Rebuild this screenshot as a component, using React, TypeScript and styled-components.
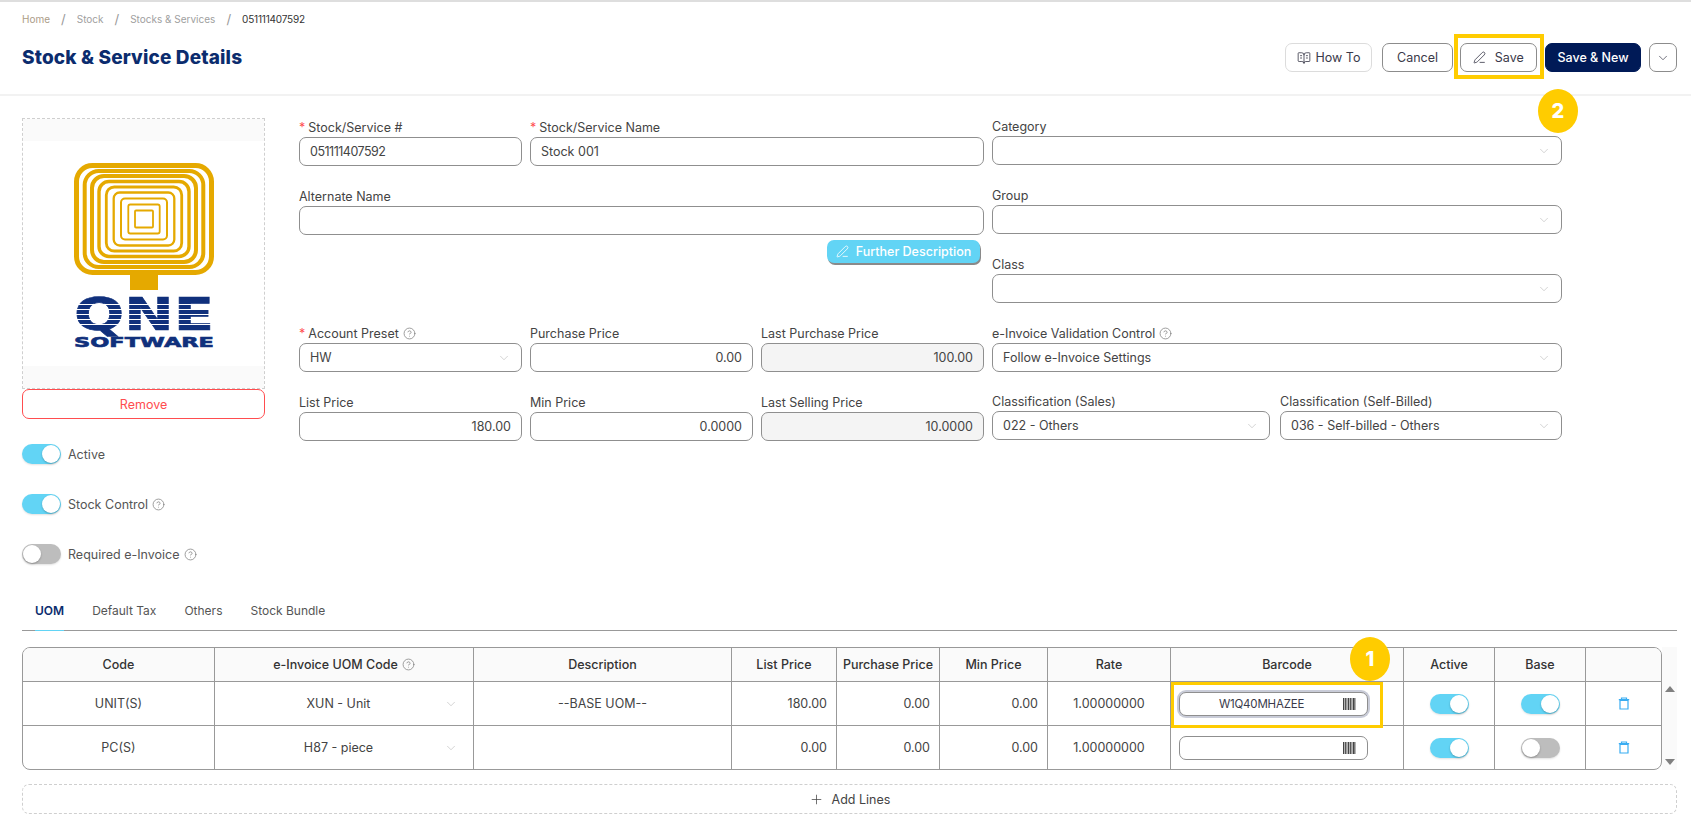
import React from 'react';
import styled, { createGlobalStyle } from 'styled-components';
import { BookOpenText, ChevronDown, CircleHelp, PenLine, Plus } from 'lucide-react';

const GlobalStyle = createGlobalStyle`
  html, body {
    margin: 0;
    padding: 0;
    background: #fff;
  }
  * {
    box-sizing: border-box;
  }
  body {
    font-family: Inter, "Open Sans", "Liberation Sans", sans-serif;
    font-size: 12.5px;
    color: #3a3a3a;
  }
`;

const Page = styled.div`
  width: 1691px;
  height: 833px;
  overflow: hidden;
  border-top: 2px solid #dedede;
`;

const Header = styled.header`
  height: 94px;
  display: flex;
  justify-content: space-between;
  padding: 10px 14px 0 22px;
  border-bottom: 2px solid #f2f2f2;
`;

const Breadcrumb = styled.nav`
  display: flex;
  align-items: center;
  height: 14px;
  font-size: 10px;
`;

const Crumb = styled.span<{ $tone?: 'home' | 'current' }>`
  color: ${(p) => (p.$tone === 'current' ? '#333' : p.$tone === 'home' ? '#ab9c88' : '#a0a0a0')};
  letter-spacing: ${(p) => (p.$tone === 'current' ? '-0.2px' : '0')};
`;

const CrumbSep = styled.span`
  margin: 0 11px;
  font-size: 13px;
  color: #999;
`;

const Title = styled.h1`
  margin: 20px 0 0;
  font-size: 19px;
  line-height: 24px;
  font-weight: 800;
  letter-spacing: 0.15px;
  color: #0b2c6e;
`;

const Actions = styled.div`
  display: flex;
  margin-top: 31px;
  height: 29px;
`;

const ActionButton = styled.button<{ $w: number; $gap: number; $tone?: 'soft' | 'dark' }>`
  width: ${(p) => p.$w}px;
  height: 29px;
  margin-right: ${(p) => p.$gap}px;
  display: inline-flex;
  align-items: center;
  justify-content: center;
  gap: 5px;
  padding: 0;
  border-radius: 7px;
  border: 1px solid ${(p) => (p.$tone === 'soft' ? '#dcdcdc' : p.$tone === 'dark' ? '#001a57' : '#8c8c8c')};
  background: ${(p) => (p.$tone === 'dark' ? '#001a57' : '#fff')};
  color: ${(p) => (p.$tone === 'dark' ? '#fff' : '#3a3a4a')};
  font: ${(p) => (p.$tone === 'dark' ? 500 : 400)} 12.5px Inter, "Liberation Sans", sans-serif;
`;

const Highlight = styled.div`
  position: relative;
  margin-right: 8px;

  &::after {
    content: '';
    position: absolute;
    left: -6px;
    right: -7px;
    top: -9px;
    bottom: -7px;
    border: 4px solid #ffcc00;
    pointer-events: none;
  }
`;

const StepBadge = styled.span<{ $left: number; $top: number }>`
  position: absolute;
  left: ${(p) => p.$left}px;
  top: ${(p) => p.$top}px;
  z-index: 2;
  width: 40px;
  height: 44px;
  border-radius: 50%;
  background: #ffcc00;
  color: #fff;
  display: flex;
  align-items: center;
  justify-content: center;
  font: 800 20px Inter, "Liberation Sans", sans-serif;
`;

const Body = styled.main`
  display: flex;
  gap: 34px;
  padding: 22px 0 0 22px;
`;

const Sidebar = styled.aside`
  width: 243px;
  display: flex;
  flex-direction: column;
`;

const ImageBox = styled.div`
  height: 271px;
  display: flex;
  flex-direction: column;
  border: 1px dashed #cfcfcf;
`;

const ImageStrip = styled.div`
  height: 22px;
  flex: none;
  background: #fafafa;
`;

const ImageArea = styled.div`
  flex: 1;
  display: flex;
  align-items: center;
  justify-content: center;
  padding-top: 9px;
`;

const RemoveButton = styled.button`
  height: 30px;
  border: 1px solid #ff4d4f;
  border-radius: 7px;
  background: #fff;
  color: #ff4d4f;
  font: 400 12.5px Inter, "Liberation Sans", sans-serif;
`;

const ToggleList = styled.div`
  display: flex;
  flex-direction: column;
  gap: 30px;
  margin-top: 25px;
`;

const ToggleRow = styled.div`
  display: flex;
  align-items: center;
  gap: 7px;
  height: 20px;
  color: #555;
`;

const ToggleText = styled.span`
  display: inline-flex;
  align-items: center;
`;

const Toggle = styled.span<{ $on?: boolean }>`
  position: relative;
  display: block;
  flex: none;
  width: 39px;
  height: 20px;
  border-radius: 10px;
  background: ${(p) => (p.$on ? '#62d4f5' : '#bdbdbd')};
  box-shadow: 0 1px 2px rgba(0, 0, 0, 0.12);

  &::after {
    content: '';
    position: absolute;
    top: 1px;
    left: ${(p) => (p.$on ? '20px' : '1px')};
    width: 18px;
    height: 18px;
    border-radius: 50%;
    background: #fff;
    box-shadow: 0 1px 2px rgba(0, 0, 0, 0.25);
  }
`;

const HelpIcon = styled(CircleHelp)`
  flex: none;
  color: #808080;
  margin-left: 4px;
`;

const Form = styled.section`
  display: flex;
  gap: 8px;
`;

const LeftForm = styled.div`
  width: 685px;
  padding-top: 1px;
`;

const FormRow = styled.div<{ $mt?: number }>`
  display: grid;
  grid-template-columns: repeat(3, 223px);
  column-gap: 8px;
  margin-top: ${(p) => p.$mt ?? 0}px;
`;

const RightForm = styled.div`
  width: 570px;
  display: flex;
  flex-direction: column;
  gap: 22px;
`;

const SplitRow = styled.div`
  display: grid;
  grid-template-columns: 278px 282px;
  column-gap: 10px;
  margin-top: -1px;
`;

const Field = styled.div<{ $span?: number }>`
  grid-column: span ${(p) => p.$span ?? 1};
  display: flex;
  flex-direction: column;
  min-width: 0;
`;

const Label = styled.label`
  display: flex;
  align-items: center;
  height: 18px;
  padding-bottom: 2px;
  color: #444;
  font-size: 12.5px;
`;

const Req = styled.span`
  color: #ff4d4f;
  margin-right: 3px;
`;

const Input = styled.input<{ $right?: boolean; $tight?: boolean }>`
  width: 100%;
  height: 29px;
  padding: 0 10px;
  border: 1px solid #8f8f8f;
  border-radius: 7px;
  background: ${(p) => (p.readOnly ? '#f4f4f4' : '#fff')};
  color: #444;
  text-align: ${(p) => (p.$right ? 'right' : 'left')};
  letter-spacing: ${(p) => (p.$tight ? '-0.5px' : '0')};
  font: 400 12.5px Inter, "Liberation Sans", sans-serif;
  outline: none;
`;

const Select = styled.div`
  height: 29px;
  display: flex;
  align-items: center;
  justify-content: space-between;
  padding: 0 10px;
  border: 1px solid #8f8f8f;
  border-radius: 7px;
  background: #fff;
  color: #444;
`;

const Chevron = styled(ChevronDown)`
  flex: none;
  color: #b5b5b5;
`;

const ButtonRow = styled.div`
  display: flex;
  justify-content: flex-end;
  margin: 5px 4px 0 0;
`;

const FurtherButton = styled.button`
  width: 153px;
  height: 23px;
  display: inline-flex;
  align-items: center;
  justify-content: center;
  gap: 7px;
  padding: 0;
  border: none;
  border-radius: 7px;
  background: #62d4f5;
  box-shadow: 1px 2px 0 #8a8a8a;
  color: #fff;
  font: 500 12.5px Inter, "Liberation Sans", sans-serif;
`;

const TabSection = styled.section`
  margin: 28px 14px 0 22px;
`;

const TabBar = styled.div`
  display: flex;
  gap: 28px;
  height: 39px;
  padding-left: 13px;
  border-bottom: 1px solid #999;
  font-size: 12px;
`;

const Tab = styled.div<{ $active?: boolean }>`
  height: 39px;
  display: flex;
  align-items: center;
  padding-bottom: 2px;
  color: ${(p) => (p.$active ? '#0b2c6e' : '#555')};
  font-weight: ${(p) => (p.$active ? 600 : 400)};
  border-bottom: 1px solid ${(p) => (p.$active ? '#62d4f5' : 'transparent')};
`;

const TableWrap = styled.div`
  display: flex;
  margin-top: 16px;
`;

const Table = styled.div`
  width: 1641px;
  border: 1px solid #999;
  border-radius: 8px;
`;

const TableRow = styled.div<{ $head?: boolean }>`
  display: grid;
  grid-template-columns: 192px 259px 258px 105px 103px 108px 123px 233px 91px 91px 1fr;
  height: ${(p) => (p.$head ? 34 : 44)}px;
  background: ${(p) => (p.$head ? '#fafafa' : 'transparent')};
  border-bottom: 1px solid #999;
  border-radius: ${(p) => (p.$head ? '7px 7px 0 0' : '0')};
  font-weight: ${(p) => (p.$head ? 500 : 400)};
  color: ${(p) => (p.$head ? '#333' : '#444')};

  &:last-child {
    height: 43px;
    border-bottom: none;
  }
`;

const Cell = styled.div<{ $align?: 'right' | 'center' }>`
  display: flex;
  align-items: center;
  justify-content: ${(p) => (p.$align === 'right' ? 'flex-end' : 'center')};
  padding: ${(p) => (p.$align === 'right' ? '0 9px 0 0' : '0')};
  border-right: 1px solid #999;
  min-width: 0;

  &:last-child {
    border-right: none;
  }
`;

const UomSelect = styled.div`
  width: 100%;
  display: flex;
  align-items: center;
  padding: 0 15px 0 18px;
`;

const UomText = styled.span`
  flex: 1;
  text-align: center;
`;

const BarcodeHead = styled(Cell)`
  position: relative;
`;

const BarcodeCell = styled(Cell)<{ $marked?: boolean }>`
  position: relative;
  justify-content: flex-start;
  padding-left: 8px;

  &::after {
    content: ${(p) => (p.$marked ? "''" : 'none')};
    position: absolute;
    inset: 0 20px -3px 0;
    border: 3px solid #ffcc00;
    pointer-events: none;
  }
`;

const BarcodeField = styled.div<{ $focus?: boolean }>`
  width: 189px;
  height: 24px;
  display: flex;
  align-items: center;
  padding: 0 11px 0 0;
  border: 1px solid #8f8f8f;
  border-radius: 7px;
  background: #fff;
  box-shadow: ${(p) => (p.$focus ? '0 0 0 2px #c9ccd8' : 'none')};
`;

const BarcodeText = styled.span`
  flex: 1;
  text-align: center;
  font-size: 11.5px;
  letter-spacing: -0.2px;
  color: #3a3a4a;
`;

const TrashSvg = styled.svg`
  color: #39adf2;
`;

const ScrollRail = styled.div`
  width: 15px;
  display: flex;
  flex-direction: column;
  justify-content: space-between;
  align-items: center;
  padding: 39px 0 5px;
  background: #fafafa;
`;

const ScrollArrow = styled.span<{ $down?: boolean }>`
  width: 0;
  height: 0;
  border-left: 5px solid transparent;
  border-right: 5px solid transparent;
  border-bottom: ${(p) => (p.$down ? 'none' : '6px solid #808080')};
  border-top: ${(p) => (p.$down ? '6px solid #808080' : 'none')};
`;

const AddLines = styled.div`
  height: 30px;
  margin-top: 14px;
  display: flex;
  align-items: center;
  justify-content: center;
  gap: 8px;
  border: 1px dashed #cfcfcf;
  border-radius: 7px;
  color: #444;
`;

const LogoWord = styled.text`
  font-family: "DejaVu Sans", "Liberation Sans", sans-serif;
  font-weight: 700;
  fill: #10307c;
  stroke: #10307c;
  stroke-width: 0.6px;
`;

// concentric rings of the logo: half width, half height, stroke, corner radius
const logoRings = [
  [67.5, 53.5, 5, 16],
  [59.3, 48, 4, 14],
  [52, 43, 4, 12],
  [45, 37.5, 3.4, 10],
  [37.7, 32, 2.8, 8],
  [30.3, 26.5, 2.3, 6],
  [23, 20.5, 2, 4],
  [15.7, 14.5, 1.8, 2],
  [9, 8.5, 1.8, 1],
];

const Logo = () => (
  <svg width="140" height="190" viewBox="0 0 140 190">
    {logoRings.map(([w, h, s, r]) => (
      <rect
        key={w}
        x={70 - w}
        y={56 - h}
        width={w * 2}
        height={h * 2}
        rx={r}
        fill="none"
        stroke="#e5a900"
        strokeWidth={s}
      />
    ))}
    <rect x="56" y="111" width="28" height="16" fill="#e5a900" />
    <LogoWord x="0" y="167" fontSize="44" textLength="140" lengthAdjust="spacingAndGlyphs">
      QNE
    </LogoWord>
    {[141, 146, 151, 156, 161].map((y) => (
      <rect key={y} x="0" y={y} width="140" height="1" fill="#fff" />
    ))}
    <LogoWord x="0" y="184" fontSize="14.5" textLength="140" lengthAdjust="spacingAndGlyphs">
      SOFTWARE
    </LogoWord>
  </svg>
);

const BarcodeIcon = () => (
  <svg width="13" height="12" viewBox="0 0 13 12" fill="#444">
    {[0, 2, 3.5, 5, 7, 8.5, 10, 11.5].map((x, i) => (
      <rect key={x} x={x} y="0" width={i % 3 === 0 ? 1.4 : 0.9} height="12" />
    ))}
  </svg>
);

const TrashIcon = () => (
  <TrashSvg width="12" height="13" viewBox="0 0 12 13" fill="none" stroke="currentColor" strokeWidth="1.2">
    <path d="M2 3.5h8v8.5H2z" />
    <path d="M0.8 2.6h10.4M3.5 2.2V1h5v1.2" />
  </TrashSvg>
);

const uomRows = [
  { code: 'UNIT(S)', tax: 'XUN - Unit', desc: '--BASE UOM--', list: '180.00', barcode: 'W1Q40MHAZEE', base: true },
  { code: 'PC(S)', tax: 'H87 - piece', desc: '', list: '0.00', barcode: '', base: false },
];

export default function App() {
  return (
    <Page>
      <GlobalStyle />
      <Header>
        <div>
          <Breadcrumb>
            <Crumb $tone="home">Home</Crumb>
            <CrumbSep>/</CrumbSep>
            <Crumb>Stock</Crumb>
            <CrumbSep>/</CrumbSep>
            <Crumb>Stocks &amp; Services</Crumb>
            <CrumbSep>/</CrumbSep>
            <Crumb $tone="current">051111407592</Crumb>
          </Breadcrumb>
          <Title>Stock &amp; Service Details</Title>
        </div>
        <Actions>
          <ActionButton $w={87} $gap={10} $tone="soft">
            <BookOpenText size={14} strokeWidth={1.4} />
            How To
          </ActionButton>
          <ActionButton $w={71} $gap={7}>Cancel</ActionButton>
          <Highlight>
            <ActionButton $w={77} $gap={0}>
              <PenLine size={13} strokeWidth={1.5} />
              &nbsp;Save
            </ActionButton>
            <StepBadge $left={78} $top={46}>2</StepBadge>
          </Highlight>
          <ActionButton $w={96} $gap={8} $tone="dark">Save &amp; New</ActionButton>
          <ActionButton $w={28} $gap={0}>
            <ChevronDown size={14} strokeWidth={1.2} />
          </ActionButton>
        </Actions>
      </Header>

      <Body>
        <Sidebar>
          <ImageBox>
            <ImageStrip />
            <ImageArea>
              <Logo />
            </ImageArea>
            <ImageStrip />
          </ImageBox>
          <RemoveButton>Remove</RemoveButton>
          <ToggleList>
            <ToggleRow>
              <Toggle $on />
              Active
            </ToggleRow>
            <ToggleRow>
              <Toggle $on />
              <ToggleText>
                Stock Control
                <HelpIcon size={13} strokeWidth={1.4} />
              </ToggleText>
            </ToggleRow>
            <ToggleRow>
              <Toggle />
              <ToggleText>
                Required e-Invoice
                <HelpIcon size={13} strokeWidth={1.4} />
              </ToggleText>
            </ToggleRow>
          </ToggleList>
        </Sidebar>

        <Form>
          <LeftForm>
            <FormRow>
              <Field>
                <Label><Req>*</Req>Stock/Service #</Label>
                <Input $tight defaultValue="051111407592" />
              </Field>
              <Field $span={2}>
                <Label><Req>*</Req>Stock/Service Name</Label>
                <Input defaultValue="Stock 001" />
              </Field>
            </FormRow>
            <FormRow $mt={22}>
              <Field $span={3}>
                <Label>Alternate Name</Label>
                <Input />
              </Field>
            </FormRow>
            <ButtonRow>
              <FurtherButton>
                <PenLine size={13} strokeWidth={1.5} />
                Further Description
              </FurtherButton>
            </ButtonRow>
            <FormRow $mt={62}>
              <Field>
                <Label>
                  <Req>*</Req>Account Preset
                  <HelpIcon size={13} strokeWidth={1.4} />
                </Label>
                <Select>HW<Chevron size={14} strokeWidth={1} /></Select>
              </Field>
              <Field>
                <Label>Purchase Price</Label>
                <Input $right defaultValue="0.00" />
              </Field>
              <Field>
                <Label>Last Purchase Price</Label>
                <Input $right readOnly value="100.00" />
              </Field>
            </FormRow>
            <FormRow $mt={22}>
              <Field>
                <Label>List Price</Label>
                <Input $right defaultValue="180.00" />
              </Field>
              <Field>
                <Label>Min Price</Label>
                <Input $right defaultValue="0.0000" />
              </Field>
              <Field>
                <Label>Last Selling Price</Label>
                <Input $right readOnly value="10.0000" />
              </Field>
            </FormRow>
          </LeftForm>

          <RightForm>
            <Field>
              <Label>Category</Label>
              <Select><span /><Chevron size={14} strokeWidth={1} /></Select>
            </Field>
            <Field>
              <Label>Group</Label>
              <Select><span /><Chevron size={14} strokeWidth={1} /></Select>
            </Field>
            <Field>
              <Label>Class</Label>
              <Select><span /><Chevron size={14} strokeWidth={1} /></Select>
            </Field>
            <Field>
              <Label>
                e-Invoice Validation Control
                <HelpIcon size={13} strokeWidth={1.4} />
              </Label>
              <Select>Follow e-Invoice Settings<Chevron size={14} strokeWidth={1} /></Select>
            </Field>
            <SplitRow>
              <Field>
                <Label>Classification (Sales)</Label>
                <Select>022 - Others<Chevron size={14} strokeWidth={1} /></Select>
              </Field>
              <Field>
                <Label>Classification (Self-Billed)</Label>
                <Select>036 - Self-billed - Others<Chevron size={14} strokeWidth={1} /></Select>
              </Field>
            </SplitRow>
          </RightForm>
        </Form>
      </Body>

      <TabSection>
        <TabBar>
          <Tab $active>UOM</Tab>
          <Tab>Default Tax</Tab>
          <Tab>Others</Tab>
          <Tab>Stock Bundle</Tab>
        </TabBar>

        <TableWrap>
          <Table>
            <TableRow $head>
              <Cell>Code</Cell>
              <Cell>
                e-Invoice UOM Code
                <HelpIcon size={13} strokeWidth={1.4} />
              </Cell>
              <Cell>Description</Cell>
              <Cell>List Price</Cell>
              <Cell>Purchase Price</Cell>
              <Cell>Min Price</Cell>
              <Cell>Rate</Cell>
              <BarcodeHead>
                Barcode
                <StepBadge $left={179} $top={-11}>1</StepBadge>
              </BarcodeHead>
              <Cell>Active</Cell>
              <Cell>Base</Cell>
              <Cell />
            </TableRow>
            {uomRows.map((row, i) => (
              <TableRow key={row.code}>
                <Cell>{row.code}</Cell>
                <Cell>
                  <UomSelect>
                    <UomText>{row.tax}</UomText>
                    <Chevron size={14} strokeWidth={1} />
                  </UomSelect>
                </Cell>
                <Cell>{row.desc}</Cell>
                <Cell $align="right">{row.list}</Cell>
                <Cell $align="right">0.00</Cell>
                <Cell $align="right">0.00</Cell>
                <Cell>1.00000000</Cell>
                <BarcodeCell $marked={i === 0}>
                  <BarcodeField $focus={i === 0}>
                    <BarcodeText>{row.barcode}</BarcodeText>
                    <BarcodeIcon />
                  </BarcodeField>
                </BarcodeCell>
                <Cell><Toggle $on /></Cell>
                <Cell><Toggle $on={row.base} /></Cell>
                <Cell><TrashIcon /></Cell>
              </TableRow>
            ))}
          </Table>
          <ScrollRail>
            <ScrollArrow />
            <ScrollArrow $down />
          </ScrollRail>
        </TableWrap>

        <AddLines>
          <Plus size={15} strokeWidth={1.2} />
          Add Lines
        </AddLines>
      </TabSection>
    </Page>
  );
}
